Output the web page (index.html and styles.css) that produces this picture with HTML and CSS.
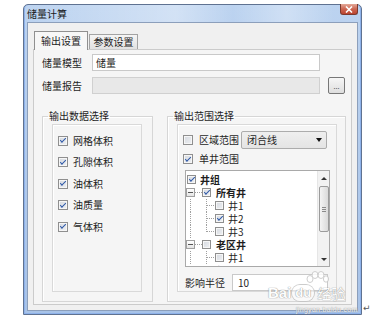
FILE: index.html
```html
<!DOCTYPE html>
<html lang="zh-CN">
<head>
  <meta charset="UTF-8">
  <title>储量计算</title>
  <link rel="stylesheet" href="styles.css">
</head>
<body>
  <div class="page">
    <div class="win">
      <div class="titlebar">
        <span class="title">储量计算</span>
        <span class="close">
          <svg width="8" height="7" viewBox="0 0 8 7"><path d="M1 0.5 L7 6.5 M7 0.5 L1 6.5" stroke="#fff" stroke-width="1.6"/></svg>
        </span>
      </div>
      <div class="client">
        <div class="tabs">
          <div class="tab tab--active">输出设置</div>
          <div class="tab">参数设置</div>
        </div>
        <div class="panel">
          <div class="field">
            <span class="field__label">储量模型</span>
            <div class="edit">储量</div>
          </div>
          <div class="field field--second">
            <span class="field__label">储量报告</span>
            <div class="edit edit--readonly"></div>
            <div class="btn-more">...</div>
          </div>

          <div class="groups">
            <fieldset class="group">
              <legend>输出数据选择</legend>
              <div class="inner inner--list">
                <div class="check"><span class="cb cb--on"></span>网格体积</div>
                <div class="check"><span class="cb cb--on"></span>孔隙体积</div>
                <div class="check"><span class="cb cb--on"></span>油体积</div>
                <div class="check"><span class="cb cb--on"></span>油质量</div>
                <div class="check"><span class="cb cb--on"></span>气体积</div>
              </div>
            </fieldset>

            <fieldset class="group group--right">
              <legend>输出范围选择</legend>
              <div class="inner inner--range">
                <div class="range-row">
                  <span class="cb"></span>
                  <span class="range-row__text">区域范围</span>
                  <div class="combo"><span>闭合线</span><span class="combo__arrow"></span></div>
                </div>
                <div class="range-row range-row--single">
                  <span class="cb cb--on"></span>
                  <span class="range-row__text">单井范围</span>
                </div>

                <div class="treebox">
                  <ul class="tree">
                    <li class="node"><span class="cb cb--small cb--on"></span><b>井组</b></li>
                    <li class="node node--group"><span class="exp"></span><span class="stub"></span><span class="cb cb--small cb--on"></span><b>所有井</b></li>
                    <li class="node node--leaf"><span class="vl"></span><span class="elbow"></span><span class="cb cb--small"></span>井1</li>
                    <li class="node node--leaf"><span class="vl"></span><span class="elbow"></span><span class="cb cb--small cb--on"></span>井2</li>
                    <li class="node node--leaf"><span class="vl"></span><span class="elbow elbow--last"></span><span class="cb cb--small"></span>井3</li>
                    <li class="node node--group"><span class="exp"></span><span class="stub"></span><span class="cb cb--small"></span><b>老区井</b></li>
                    <li class="node node--leaf"><span class="vl"></span><span class="elbow"></span><span class="cb cb--small"></span>井1</li>
                    <li class="node node--group"><span class="exp"></span><span class="stub"></span><span class="cb cb--small"></span><b>新区井</b></li>
                  </ul>
                  <div class="vscroll">
                    <div class="vscroll__btn"><span class="arrow-up"></span></div>
                    <div class="vscroll__thumb"><span class="grip"></span></div>
                    <div class="vscroll__track"></div>
                    <div class="vscroll__btn"><span class="arrow-down"></span></div>
                  </div>
                </div>

                <div class="radius">
                  <span class="radius__label">影响半径</span>
                  <div class="edit edit--radius">10</div>
                </div>
              </div>
            </fieldset>
          </div>
        </div>
      </div>

      <div class="watermark">
        <svg class="watermark__paw" width="24" height="14" viewBox="0 0 24 14">
          <ellipse cx="5" cy="8" rx="3" ry="3.5" fill="#fff" stroke="#c8c8c8"/>
          <ellipse cx="10" cy="4" rx="3" ry="3.5" fill="#fff" stroke="#c8c8c8"/>
          <ellipse cx="16" cy="4" rx="3" ry="3.5" fill="#fff" stroke="#c8c8c8"/>
          <ellipse cx="21" cy="8" rx="2.6" ry="3.2" fill="#fff" stroke="#c8c8c8"/>
        </svg>
        <div class="watermark__logo"><span>Bai</span><span class="watermark__du">du</span><span class="watermark__jy">经验</span></div>
        <div class="watermark__url">jingyan.baidu.com</div>
      </div>
    </div>
    <span class="para">↵</span>
  </div>
</body>
</html>
```

FILE: styles.css
```css
*{
  box-sizing: border-box;
}
body{
  margin: 0;
  background: #fff;
  font: 10px/12px "Noto Sans CJK SC", "Noto Sans", sans-serif;
  color: #1e1e1e;
}
.page{
  display: flex;
  align-items: flex-end;
  padding: 4px 0 0 23px;
}

/* window frame */
.win{
  position: relative;
  width: 339px;
  height: 311px;
  border: 1px solid #5f7291;
  border-radius: 5px 5px 0 0;
  background: linear-gradient(#bcd3f0, #a8c3e8);
  box-shadow: inset 1px 0 0 #8eb2ea, inset -1px 0 0 #8eb2ea, inset 0 -1px 0 #8eb2ea;
  padding: 0 3px 3px;
  display: flex;
  flex-direction: column;
}
.titlebar{
  height: 18px;
  margin: 0 -3px;
  padding: 0 3px;
  display: flex;
  align-items: center;
  background: linear-gradient(90deg, rgba(255,255,255,0) 0, rgba(255,255,255,.35) 45%, rgba(255,255,255,0) 62%, rgba(255,255,255,.3) 78%, rgba(255,255,255,0) 92%);
}
.title{
  color: #1a1a1a;
  padding-top: 1px;
}
.close{
  margin-left: auto;
  align-self: flex-start;
  margin-top: -1px;
  width: 18px;
  height: 11px;
  border: 1px solid #7b3a2f;
  border-top: none;
  border-radius: 0 0 3px 3px;
  background: linear-gradient(#e4a999, #cd6652 50%, #bb442f);
  display: flex;
  align-items: center;
  justify-content: center;
}

.client{
  flex: 1;
  border: 1px solid #8c9fbb;
  background: #f0f0f0;
  padding: 8px 5px 5px;
  display: flex;
  flex-direction: column;
}

/* tabs */
.tabs{
  display: flex;
  align-items: flex-end;
  height: 18px;
  padding-left: 1px;
  position: relative;
  z-index: 1;
}
.tab{
  width: 49px;
  height: 15px;
  margin-left: 1px;
  border: 1px solid #a3a3a3;
  border-bottom: none;
  background: linear-gradient(#f5f5f5, #e1e1e1);
  text-align: center;
  line-height: 14px;
}
.tab--active{
  width: 54px;
  height: 19px;
  margin: 0 0 -1px;
  border-color: #909090;
  background: #f7f7f7;
  line-height: 17px;
}

.panel{
  flex: 1;
  border: 1px solid #cbcbcb;
  background: #f5f5f5;
  padding: 4px 0 2px 8px;
  display: flex;
  flex-direction: column;
}
.field{
  display: flex;
  align-items: center;
  height: 17px;
}
.field--second{
  margin-top: 6px;
}
.field__label{
  width: 50px;
}
.edit{
  width: 228px;
  height: 17px;
  border: 1px solid #c9c9c9;
  background: #fff;
  padding-left: 3px;
  line-height: 15px;
}
.edit--readonly{
  background: #e8e8e8;
  border-color: #d0d0d0;
}
.btn-more{
  width: 17px;
  height: 17px;
  margin-left: 8px;
  border: 1px solid #777;
  border-radius: 2px;
  background: linear-gradient(#f6f6f6, #dedede);
  font-size: 7px;
  line-height: 16px;
  text-align: center;
  color: #444;
}

/* group boxes */
.groups{
  flex: 1;
  margin-top: 16px;
  display: grid;
  grid-template-columns: 111px 179px;
  column-gap: 14px;
}
.group{
  margin: 0;
  min-width: 0;
  border: 1px solid #d6d6d6;
  box-shadow: inset 1px 1px 0 #fff;
  padding: 2px 10px 9px 9px;
  display: flex;
}
.group--right{
  padding-right: 8px;
}
.group legend{
  padding: 0 1px;
  margin-left: -4px;
  line-height: 12px;
}
.inner{
  flex: 1;
  border: 1px solid #d9d9d9;
  box-shadow: inset 1px 1px 0 #fff;
  padding: 5px 0 0 5px;
}
.inner--list .check{
  display: flex;
  align-items: center;
  gap: 5px;
  height: 21.5px;
}
.inner--range{
  padding-top: 6px;
}

/* checkboxes */
.cb{
  flex: none;
  width: 10px;
  height: 10px;
  border: 1px solid #8f8f8f;
  background: linear-gradient(135deg, #d5d9df, #eef0f3);
  box-shadow: inset 0 0 0 1px #f6f6f6;
  display: flex;
  align-items: center;
  justify-content: center;
}
.cb--small{
  width: 9px;
  height: 9px;
}
.cb--on::after{
  content: "";
  width: 5px;
  height: 2px;
  margin-top: -2px;
  border-left: 1.5px solid #2c57a6;
  border-bottom: 1.5px solid #2c57a6;
  transform: rotate(-45deg);
}

.range-row{
  display: flex;
  align-items: center;
  height: 18px;
}
.range-row__text{
  width: 40px;
  margin-left: 6px;
}
.range-row--single{
  height: 12px;
  margin-top: 4px;
}
.combo{
  width: 86px;
  height: 18px;
  margin-left: 2px;
  border: 1px solid #acacac;
  border-radius: 2px;
  background: linear-gradient(#efefef, #e4e4e4);
  display: flex;
  align-items: center;
  padding: 0 4px 0 5px;
}
.combo__arrow{
  margin-left: auto;
  border-left: 3px solid transparent;
  border-right: 3px solid transparent;
  border-top: 4px solid #111;
}

/* tree */
.treebox{
  width: 145px;
  height: 97px;
  margin: 5px 0 0 2px;
  border: 1px solid #a9a9a9;
  background: #fff;
  display: flex;
}
.tree{
  flex: 1;
  margin: 0;
  padding: 2px 0 0;
  list-style: none;
  overflow: hidden;
}
.node{
  height: 13px;
  display: flex;
  align-items: center;
  white-space: nowrap;
}
.node .cb{
  margin-right: 4px;
}
.node:first-child{
  padding-left: 1px;
}
.node--group b{
  margin-left: 1px;
}
.exp{
  width: 9px;
  height: 9px;
  border: 1px solid #a0a0a0;
  background: linear-gradient(#fff, #e4e4e4);
  display: flex;
  align-items: center;
  justify-content: center;
}
.exp::after{
  content: "";
  width: 5px;
  height: 1px;
  background: #555;
}
.stub{
  width: 7px;
  height: 1px;
  background: repeating-linear-gradient(to right, #a0a0a0 0 1px, transparent 1px 2px);
}
.vl{
  align-self: stretch;
  width: 16px;
  margin-left: 4px;
  border-left: 1px dotted #a0a0a0;
}
.elbow{
  align-self: stretch;
  width: 9px;
  border-left: 1px dotted #a0a0a0;
  background: repeating-linear-gradient(to right, #a0a0a0 0 1px, transparent 1px 2px) no-repeat 0 6px / 100% 1px;
}
.elbow--last{
  align-self: flex-start;
  height: 7px;
}

.vscroll{
  width: 12px;
  background: #f2f2f2;
  border-left: 1px solid #e6e6e6;
  display: flex;
  flex-direction: column;
  align-items: center;
}
.vscroll__btn{
  height: 14px;
  display: flex;
  align-items: center;
  justify-content: center;
}
.arrow-up{
  border-left: 3px solid transparent;
  border-right: 3px solid transparent;
  border-bottom: 3px solid #333;
}
.arrow-down{
  border-left: 3px solid transparent;
  border-right: 3px solid transparent;
  border-top: 3px solid #333;
}
.vscroll__thumb{
  width: 10px;
  height: 46px;
  margin-top: 1px;
  border: 1px solid #9b9b9b;
  border-radius: 2px;
  background: linear-gradient(90deg, #f4f4f4, #dadada);
  display: flex;
  align-items: center;
  justify-content: center;
}
.grip{
  width: 4px;
  height: 5px;
  background: repeating-linear-gradient(#8a8a8a 0 1px, transparent 1px 2px);
}
.vscroll__track{
  flex: 1;
}

.radius{
  display: flex;
  align-items: center;
  margin: 7px 0 0 2px;
}
.radius__label{
  width: 47px;
}
.edit--radius{
  width: 96px;
  padding-left: 5px;
}

/* pasted-in watermark */
.watermark{
  position: absolute;
  left: 244px;
  top: 266px;
  width: 92px;
  color: #fff;
  opacity: .85;
  text-shadow: 0 0 1px #8c8c8c, 0 0 1px #8c8c8c;
}
.watermark__paw{
  display: block;
  margin-left: 37px;
}
.watermark__logo{
  display: flex;
  align-items: center;
  font: bold 15px/16px "Liberation Sans", sans-serif;
}
.watermark__du{
  margin-left: 1px;
  padding: 0 3px;
  border-radius: 8px;
  background: rgba(255,255,255,.6);
  box-shadow: 0 0 0 1px #c4c4c4;
  font-size: 13px;
}
.watermark__jy{
  margin-left: 3px;
  font: 14px/16px "Noto Sans CJK SC", sans-serif;
}
.watermark__url{
  margin: 5px 0 0 28px;
  font: 7px/8px "Liberation Sans", sans-serif;
  letter-spacing: .3px;
}

.para{
  margin: 0 0 2px 1px;
  font: 9px/10px "DejaVu Sans", sans-serif;
  color: #555;
}
```
